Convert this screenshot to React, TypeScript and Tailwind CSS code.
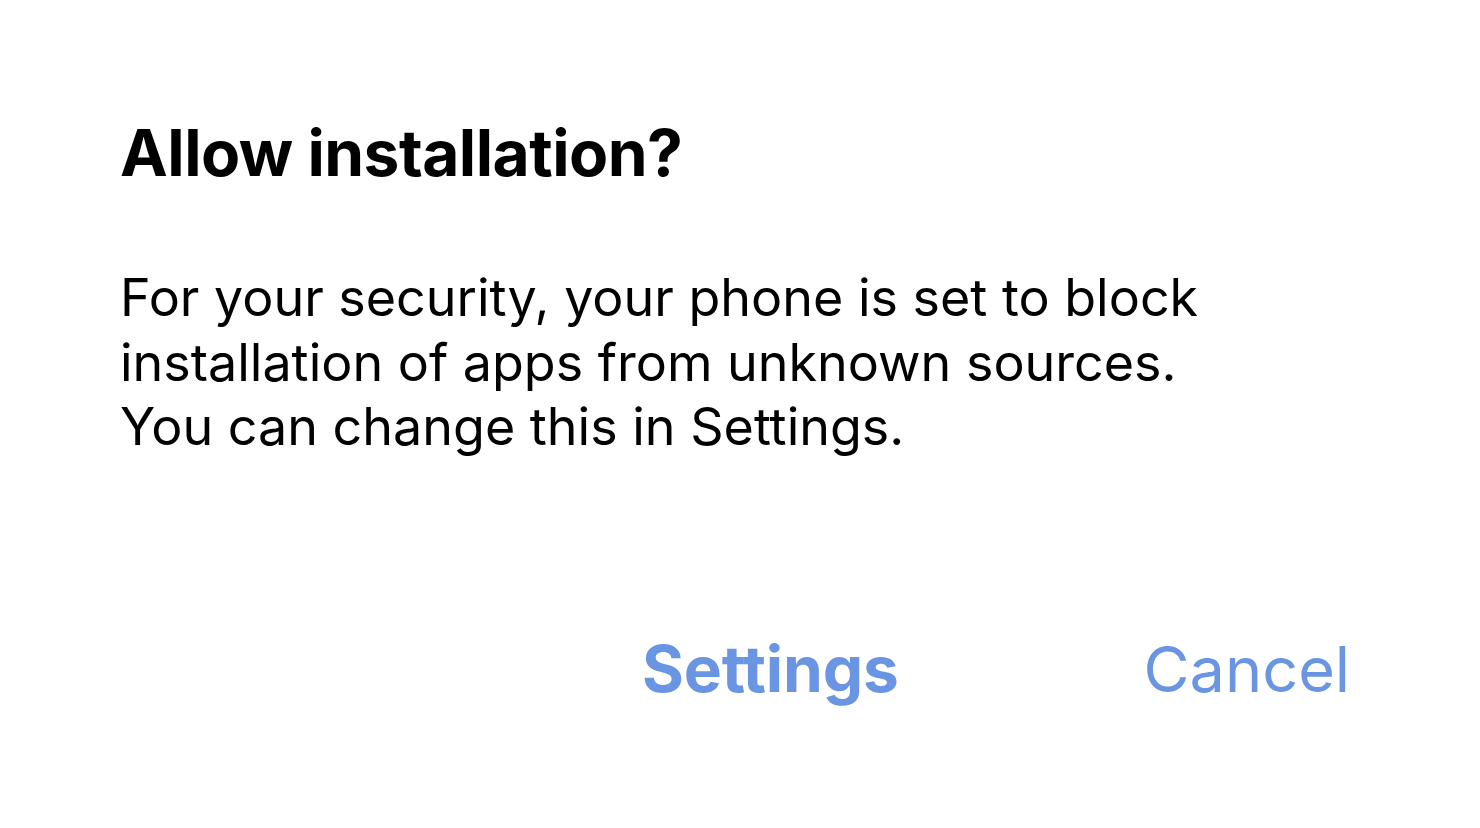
export default function App() {
  return (
    <div
      className="w-[1480px] h-[828px] bg-white flex flex-col"
      style={{ fontFamily: 'Inter, "Noto Sans", sans-serif' }}
    >
      <div className="pl-[120px] pt-[116px]">
        <h1 className="text-[64px] leading-[74px] font-bold text-black tracking-[-0.5px]">
          Allow installation?
        </h1>
      </div>
      <div className="pl-[120px] pt-[76px] pr-[200px]">
        <p className="text-[52px] leading-[64.5px] text-black">
          For your security, your phone is set to block
          <br />
          installation of apps from unknown sources.
          <br />
          You can change this in Settings.
        </p>
      </div>
      <div className="flex pt-[174px]">
        <div className="ml-[642px] text-[64px] leading-[70px] font-bold text-[#6995e3] tracking-[-0.2px]">
          Settings
        </div>
        <div className="ml-[245px] text-[63px] leading-[70px] text-[#6995e3]">
          Cancel
        </div>
      </div>
    </div>
  );
}
